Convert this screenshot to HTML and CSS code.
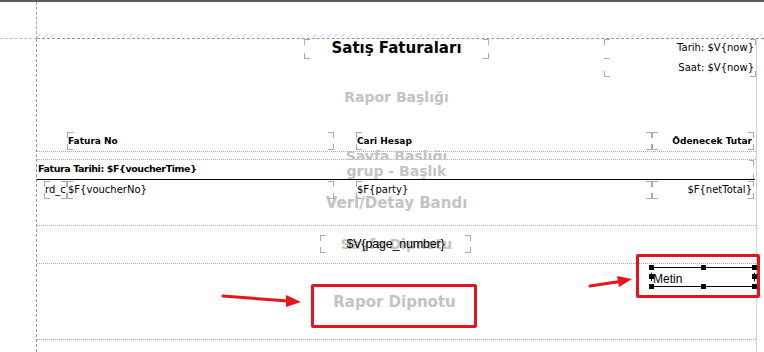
FILE: index.html
```html
<!DOCTYPE html>
<html lang="tr">
<head>
<meta charset="utf-8">
<link rel="stylesheet" href="styles.css">
</head>
<body>
<div class="screen">
  <div class="topbar"></div>
  <div class="workspace">
    <div class="corner"></div>
    <div class="ruler"><div class="zigzag"></div></div>
    <div class="gutter"></div>
    <div class="page">
      <div class="band band-a">
        <div class="wm wm-title">Rapor Başlığı</div>
        <div class="title-row">
          <div class="bracket title-box">Satış Faturaları</div>
          <div class="bracket date-box">
            <div class="date-line">Tarih: $V{now}</div>
            <div class="date-line">Saat: $V{now}</div>
            <span class="tick"></span>
          </div>
        </div>
        <div class="cols head-row">
          <div class="bracket cell c1">Fatura No</div>
          <div class="bracket cell c2">Cari Hesap</div>
          <div class="bracket cell c3">Ödenecek Tutar</div>
        </div>
      </div>
      <div class="band band-b">
        <div class="wm wm-page">Sayfa Başlığı</div>
      </div>
      <div class="band band-c">
        <div class="wm wm-group">grup - Başlık</div>
        <div class="wm wm-detail">Veri/Detay Bandı</div>
        <div class="group-row"><span class="group-text">Fatura Tarihi: $F{voucherTime}</span><span class="group-end"></span></div>
        <div class="cols data-row">
          <div class="bracket cell c0">rd_c</div>
          <div class="bracket cell c1">$F{voucherNo}</div>
          <div class="bracket cell c2">$F{party}</div>
          <div class="bracket cell c3">$F{netTotal}</div>
        </div>
      </div>
      <div class="band band-d">
        <div class="wm wm-pfoot">Sayfa Dipnotu</div>
        <div class="bracket pagenum">$V{page_number}</div>
      </div>
      <div class="band band-e">
        <div class="wm wm-rfoot">Rapor Dipnotu</div>
        <div class="metin">
          <span class="metin-text">Metin</span>
          <span class="h h1"></span><span class="h h2"></span><span class="h h3"></span>
          <span class="h h4"></span><span class="h h5"></span>
          <span class="h h6"></span><span class="h h7"></span><span class="h h8"></span>
        </div>
      </div>
      <div class="band band-f"></div>
    </div>
  </div>
  <div class="mark mark-footer"></div>
  <div class="mark mark-metin"></div>
  <svg class="arrows" width="764" height="352" viewBox="0 0 764 352">
    <line x1="223" y1="296" x2="288" y2="301" stroke="#e8141c" stroke-width="3" stroke-linecap="round"/>
    <polygon points="301,302 286,295 286,307" fill="#e8141c"/>
    <line x1="590" y1="286" x2="620" y2="281.5" stroke="#e8141c" stroke-width="3" stroke-linecap="round"/>
    <polygon points="632,279 617,276 619,287" fill="#e8141c"/>
  </svg>
</div>
</body>
</html>
```

FILE: styles.css
```css
* { box-sizing: border-box; }
html, body { margin: 0; padding: 0; background: #fff; }
body { font-family: "DejaVu Sans", sans-serif; color: #000; }

.screen { position: relative; width: 764px; height: 352px; overflow: hidden; background: #fff; }

.topbar { height: 2px; background: #585c66; }

.workspace {
  display: grid;
  grid-template-columns: 37px 720px 7px;
  grid-template-rows: 37px 313px;
}
.corner {
  border-right: 1px dashed #9aa4ad;
  border-bottom: 1px dashed #b8bcc0;
}
.ruler {
  grid-column: 2 / 4;
  border-bottom: 1px dashed #8d99a4;
  display: flex;
  align-items: flex-end;
}
.zigzag {
  width: 100%;
  height: 3px;
  margin-bottom: 1px;
  background: repeating-linear-gradient(135deg, transparent 0 2px, #e2e2e2 2px 3px, transparent 3px 5px);
}
.gutter { border-right: 1px dashed #8d99a4; }
.page {
  border-right: 1px solid #c9d3dc;
  position: relative;
}

.band { position: relative; border-bottom: 1px dotted #a8a8a8; }
.band-a { height: 113px; }
.band-b { height: 8px; }
.band-c { height: 66px; background: #fff; }
.band-d { height: 38px; background: #fff; padding-top: 9px; }
.band-e { height: 76px; padding-top: 3px; }
.band-f { height: 12px; border-bottom: none; }

/* watermark band labels */
.wm {
  position: absolute;
  left: 0; right: 0;
  text-align: center;
  font-weight: bold;
  font-size: 14px;
  color: #c3c3c3;
  line-height: 18px;
  white-space: nowrap;
}
.wm-title { top: 49px; }
.wm-page { top: -5px; }
.wm-group { top: 2px; }
.wm-detail { top: 34px; font-size: 15px; }
.wm-pfoot { top: 9px; }
.wm-rfoot { top: 29px; font-size: 15px; left: -4px; }

/* bracket corner marks */
.bracket { position: relative; }
.bracket::before {
  content: "";
  position: absolute;
  inset: 0;
  border: 1px solid #a9a9a9;
  -webkit-mask: conic-gradient(at 6px 6px, #0000 75%, #000 0) 0 0 / calc(100% - 6px) calc(100% - 6px);
  mask: conic-gradient(at 6px 6px, #0000 75%, #000 0) 0 0 / calc(100% - 6px) calc(100% - 6px);
  pointer-events: none;
}

.title-row { display: flex; align-items: flex-start; height: 38px; }
.title-box {
  margin-left: 267px;
  width: 185px;
  height: 20px;
  text-align: center;
  font-weight: bold;
  font-size: 15px;
  line-height: 19px;
}
.date-box {
  margin-left: 115px;
  width: 152px;
  height: 38px;
  font-size: 10px;
  text-align: right;
  padding: 2px 2px 0 0;
}
.date-line { height: 20px; line-height: 14px; }
.tick {
  position: absolute;
  left: 0; top: 19px;
  width: 5px; height: 1px;
  background: #a9a9a9;
}

.cols { display: flex; }
.head-row { margin-top: 55px; height: 18px; }
.cell { height: 18px; font-size: 10px; line-height: 18px; white-space: nowrap; }
.head-row .cell { font-weight: bold; font-size: 9px; }
.c0 { margin-left: 7px; width: 23px; padding-left: 1px; }
.c1 { width: 267px; padding-left: 1px; }
.head-row .c1 { margin-left: 30px; }
.c2 { margin-left: 22px; width: 296px; padding-left: 1px; }
.c3 { width: 102px; text-align: right; padding-right: 2px; }

.group-row {
  display: flex;
  height: 20px;
  border-bottom: 1px solid #000;
  width: 718px;
  position: relative;
}
.group-text {
  font-weight: bold;
  font-size: 9.5px;
  letter-spacing: -0.4px;
  line-height: 18px;
  padding-left: 1px;
  flex: 1;
}
.group-end {
  width: 5px;
  height: 19px;
  margin-right: 1px;
  border-top: 1px solid #a9a9a9;
  background: linear-gradient(#a9a9a9, #a9a9a9) right top / 1px 5px no-repeat,
              linear-gradient(#a9a9a9, #a9a9a9) right bottom / 1px 5px no-repeat;
}

.data-row { margin-top: 1px; height: 18px; }

.pagenum {
  margin-left: 283px;
  width: 151px;
  height: 18px;
  font-family: "Liberation Sans", Arial, sans-serif;
  font-size: 12.5px;
  line-height: 18px;
  text-align: center;
  letter-spacing: -0.2px;
}

.metin {
  position: relative;
  margin-left: 614px;
  width: 104px;
  height: 20px;
  border-top: 1px solid #000;
  border-bottom: 1px solid #000;
  border-left: 1px dashed #000;
  border-right: 1px dashed #000;
}
.metin-text {
  font-family: "Liberation Sans", Arial, sans-serif;
  font-size: 12px;
  line-height: 18px;
  padding-left: 1px;
}
.h { position: absolute; width: 5px; height: 5px; background: #000; }
.h1 { left: -3px; top: -3px; }
.h2 { left: 49px; top: -3px; }
.h3 { right: -3px; top: -3px; }
.h4 { left: -3px; top: 6px; }
.h5 { right: -3px; top: 6px; }
.h6 { left: -3px; bottom: -3px; }
.h7 { left: 49px; bottom: -3px; }
.h8 { right: -3px; bottom: -3px; }

/* red annotation boxes */
.mark {
  position: absolute;
  border: 3px solid #e3141d;
  border-radius: 2px;
}
.mark-footer { left: 311px; top: 284px; width: 166px; height: 44px; }
.mark-metin { left: 636px; top: 254px; width: 124px; height: 44px; }
.arrows { position: absolute; left: 0; top: 0; pointer-events: none; }
```
